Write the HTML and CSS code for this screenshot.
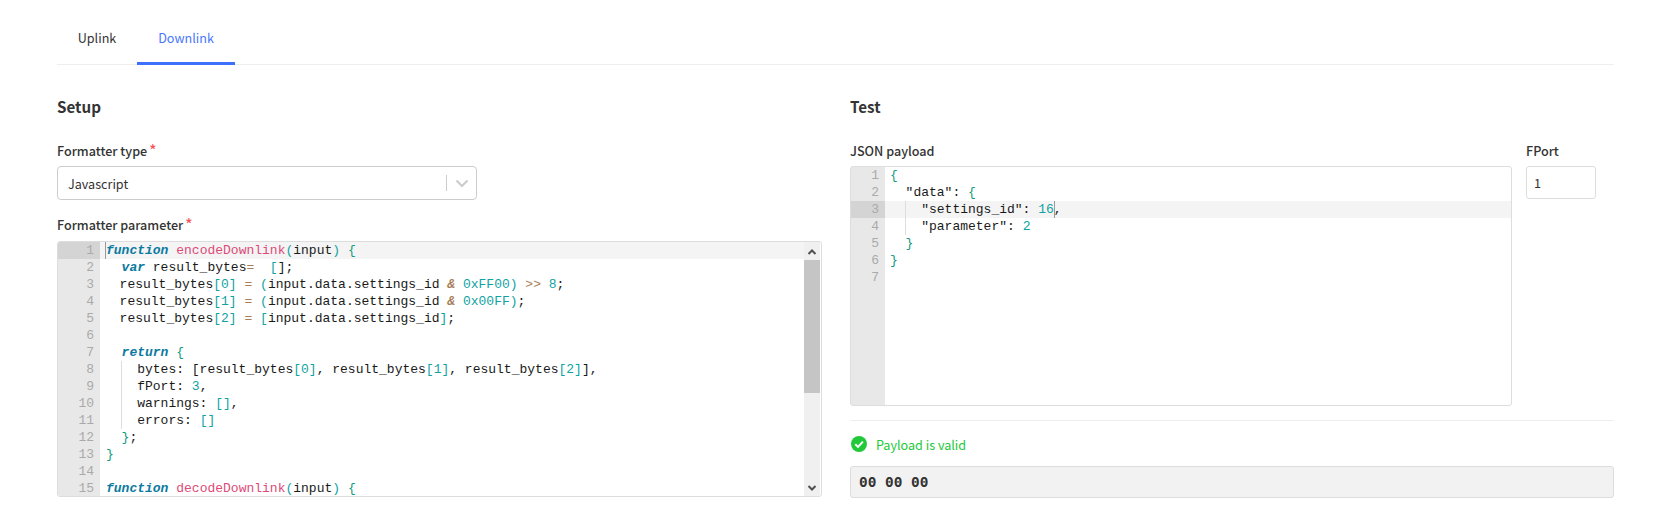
FILE: index.html
```html
<!DOCTYPE html>
<html lang="en">
<head>
<meta charset="utf-8">
<title>Payload formatter</title>
<link rel="stylesheet" href="styles.css">
</head>
<body>
<main class="page">
  <nav class="tabs">
    <a class="tab">Uplink</a>
    <a class="tab active">Downlink</a>
  </nav>
  <div class="columns">
    <section class="col">
      <h2>Setup</h2>
      <label class="label">Formatter type<span class="req">*</span></label>
      <div class="select">
        <span class="select-value">Javascript</span>
        <span class="select-sep"></span>
        <svg class="select-chev" width="14" height="9" viewBox="0 0 14 9"><path d="M1.5 1.5 7 7l5.500-5.500" fill="none" stroke="#ccc" stroke-width="2.200"/></svg>
      </div>
      <label class="label second">Formatter parameter<span class="req">*</span></label>
      <div class="editor left">
        <div class="lines">
          <div class="ln current"><i>1</i><code><b class="k">function</b> <span class="f">encodeDownlink</span><span class="p">(</span>input<span class="p">)</span> <span class="b">{</span></code></div>
          <div class="ln"><i>2</i><code>  <b class="k">var</b> result_bytes<span class="o">=</span>  <span class="p">[</span>];</code></div>
          <div class="ln tight"><i>3</i><code>  result_bytes<span class="p">[0]</span> <span class="o">=</span> <span class="p">(</span>input.data.settings_id <b class="o amp">&amp;</b> <span class="p">0xFF00)</span> <span class="o">&gt;&gt;</span> <span class="p">8</span>;</code></div>
          <div class="ln tight"><i>4</i><code>  result_bytes<span class="p">[1]</span> <span class="o">=</span> <span class="p">(</span>input.data.settings_id <b class="o amp">&amp;</b> <span class="p">0x00FF)</span>;</code></div>
          <div class="ln tight"><i>5</i><code>  result_bytes<span class="p">[2]</span> <span class="o">=</span> <span class="p">[</span>input.data.settings_id<span class="p">]</span>;</code></div>
          <div class="ln"><i>6</i><code></code></div>
          <div class="ln"><i>7</i><code>  <b class="k">return</b> <span class="b">{</span></code></div>
          <div class="ln"><i>8</i><code class="guide-l">    bytes: [result_bytes<span class="p">[0]</span>, result_bytes<span class="p">[1]</span>, result_bytes<span class="p">[2]</span>],</code></div>
          <div class="ln"><i>9</i><code class="guide-l">    fPort: <span class="p">3</span>,</code></div>
          <div class="ln"><i>10</i><code class="guide-l">    warnings: <span class="p">[]</span>,</code></div>
          <div class="ln"><i>11</i><code class="guide-l">    errors: <span class="p">[]</span></code></div>
          <div class="ln"><i>12</i><code>  <span class="b">}</span>;</code></div>
          <div class="ln"><i>13</i><code><span class="b">}</span></code></div>
          <div class="ln"><i>14</i><code></code></div>
          <div class="ln"><i>15</i><code><b class="k">function</b> <span class="f">decodeDownlink</span><span class="p">(</span>input<span class="p">)</span> <span class="b">{</span></code></div>
        </div>
        <div class="scrollbar">
          <svg class="arrow-up" width="16" height="18" viewBox="0 0 16 18"><path d="M4.500 12 8 8.500l3.500 3.500" fill="none" stroke="#505050" stroke-width="2"/></svg>
          <div class="thumb"></div>
          <div class="track"></div>
          <svg width="16" height="17" viewBox="0 0 16 17"><path d="M4.500 7 8 10.500 11.500 7" fill="none" stroke="#505050" stroke-width="2"/></svg>
        </div>
      </div>
    </section>
    <section class="col">
      <h2>Test</h2>
      <div class="test-row">
        <div class="payload">
          <label class="label">JSON payload</label>
          <div class="editor right">
            <div class="lines">
              <div class="ln"><i>1</i><code><span class="b">{</span></code></div>
              <div class="ln"><i>2</i><code>  "data": <span class="b">{</span></code></div>
              <div class="ln current"><i>3</i><code class="guide-r">    "settings_id": <span class="p">16</span><span class="caret"></span>,</code></div>
              <div class="ln"><i>4</i><code class="guide-r">    "parameter": <span class="p">2</span></code></div>
              <div class="ln"><i>5</i><code>  <span class="b">}</span></code></div>
              <div class="ln"><i>6</i><code><span class="b">}</span></code></div>
              <div class="ln"><i>7</i><code></code></div>
            </div>
          </div>
        </div>
        <div class="fport">
          <label class="label">FPort</label>
          <div class="input">1</div>
        </div>
      </div>
      <hr class="divider">
      <div class="valid">
        <svg width="16" height="16" viewBox="0 0 16 16"><circle cx="8" cy="8" r="8" fill="#21c93a"/><path d="M4.300 8.300 7 10.900l4.900-5.200" fill="none" stroke="#fff" stroke-width="1.900"/></svg>
        <span>Payload is valid</span>
      </div>
      <div class="output">00 00 00</div>
    </section>
  </div>
</main>
</body>
</html>
```

FILE: styles.css
```css
* { box-sizing: border-box; }
html, body { margin: 0; padding: 0; background: #fff; }
body {
  width: 1659px;
  height: 512px;
  overflow: hidden;
  font-family: "Noto Sans CJK SC", "Noto Sans", sans-serif;
  font-size: 12.6px;
  color: #333;
}
.page { padding: 0 45px 0 57px; }

.tabs { display: flex; height: 65px; border-bottom: 1px solid #eee; }
.tab { display: block; width: 80px; padding-top: 28px; height: 65px; text-align: center; line-height: 20px; color: #333; }
.tab.active { width: 98px; color: #4a76fd; border-bottom: 3px solid #3f70fb; }

.columns { display: grid; grid-template-columns: 765px 764px; column-gap: 28px; }
.col { min-width: 0; }
h2 { margin: 31px 0 0; font-size: 15.2px; line-height: 20px; height: 20px; font-weight: 600; color: #333; }

.label { display: block; margin-top: 25px; height: 20px; line-height: 20px; font-size: 12.6px; font-weight: 500; color: #333; }
.label.second { margin-top: 15px; }
.req { color: #f25555; margin-left: 2px; font-size: 15px; line-height: 10px; position: relative; top: 0; }

.select { display: flex; align-items: center; width: 420px; height: 34px; margin-top: 5px; border: 1px solid #ccc; border-radius: 4px; padding-left: 10px; }
.select-value { flex: 1; }
.select-sep { width: 1px; height: 16px; background: #ccc; }
.select-chev { margin: 0 7px 0 8px; }

.editor { display: flex; border: 1px solid #ddd; border-radius: 3px; overflow: hidden; font-family: "Liberation Mono", monospace; font-size: 13px; color: #1a1a1a; }
.editor.left { height: 256px; margin-top: 6px; }
.editor.right { height: 240px; margin-top: 5px; background: linear-gradient(to right, #e8e8e8 34px, #fff 34px); }
.lines { flex: 1; min-width: 0; }
.left .lines { background: linear-gradient(to right, #e8e8e8 42px, #fff 42px); }

.ln { display: flex; height: 17px; line-height: 17px; }
.ln i { flex: none; font-style: normal; text-align: right; color: #aaa; }
.left .ln i { width: 36px; margin-right: 12px; }
.right .ln i { width: 28px; margin-right: 11px; }
.ln code { font: inherit; white-space: pre; flex: 1; position: relative; }
.ln.tight code { margin-left: -2px; }
.left .ln.current { background: linear-gradient(to right, #d4d4d4 42px, #f4f4f4 42px); }
.right .ln.current { background: linear-gradient(to right, #d4d4d4 34px, #f4f4f4 34px); }
.left .ln.current code::before { content: ""; position: absolute; left: -1px; top: 0; width: 1px; height: 17px; background: #999; }

.k { color: #0b7aa0; font-style: italic; font-weight: 700; }
.f { color: #dd4a78; }
.p { color: #11a3a3; }
.b { color: #0f9a80; }
.o { color: #a67f59; }
.amp { font-style: italic; }
.caret { display: inline-block; width: 1px; height: 17px; margin-right: -1px; background: #999; vertical-align: top; }
.guide-l::before, .guide-r::before { content: ""; position: absolute; top: 0; width: 1px; height: 17px; background: #ddd; }
.guide-l::before { left: 15px; }
.guide-r::before { left: 15px; }

.scrollbar { flex: none; display: flex; flex-direction: column; width: 16px; background: #f0f0f0; margin-right: 1px; }
.scrollbar svg { flex: none; }
.thumb { height: 133px; flex: none; background: #c5c5c5; }
.track { flex: 1; }

.test-row { display: flex; }
.payload { width: 662px; }
.fport { margin-left: 14px; }
.input { width: 70px; height: 33px; margin-top: 5px; border: 1px solid #ddd; border-radius: 3px; padding-left: 7px; line-height: 31px; color: #333; }

.divider { border: 0; height: 1px; background: #eee; margin: 14px 0 0; }
.valid { display: flex; align-items: center; gap: 9px; margin-top: 13px; height: 20px; color: #21c93a; padding-left: 1px; }
.output { height: 32px; margin-top: 12px; background: #f2f2f2; border: 1px solid #ddd; border-radius: 3px; padding-left: 8px; line-height: 30px; font-family: "DejaVu Sans Mono", monospace; font-weight: 700; font-size: 14.4px; color: #333; }
```
